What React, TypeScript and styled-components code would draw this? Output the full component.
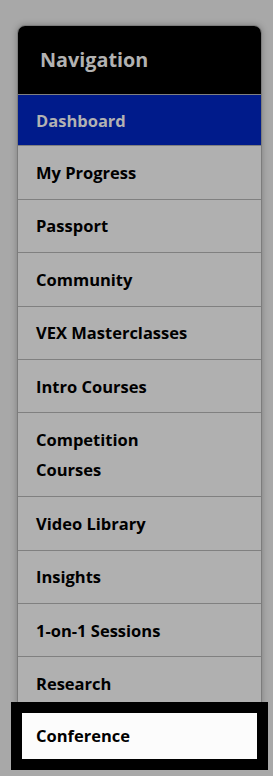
import React from "react";
import styled, { createGlobalStyle } from "styled-components";

const Global = createGlobalStyle`
  html, body {
    margin: 0;
    padding: 0;
    background: #a8a8a8;
    font-family: "Open Sans", "Noto Sans", "Liberation Sans", sans-serif;
  }
  * { box-sizing: border-box; }
`;

const Page = styled.div`
  padding: 25px 11px 0 17px;
  min-height: 776px;
  overflow: hidden;
`;

const Card = styled.nav`
  width: 245px;
  border: 1px solid #7c7c7c;
  border-radius: 8px;
  background: #b0b0b0;
  box-shadow: 0 0 6px rgba(0, 0, 0, 0.25);
  display: flex;
  flex-direction: column;
`;

const Header = styled.div`
  height: 69px;
  background: #000;
  border-radius: 7px 7px 0 0;
  border-bottom: 1px solid #808080;
  display: flex;
  align-items: center;
  padding-left: 22px;
  padding-bottom: 1px;
  color: #b2b2b2;
  font-size: 19.8px;
  font-weight: 700;
`;

const List = styled.ul`
  list-style: none;
  margin: 0;
  padding: 0;
  display: flex;
  flex-direction: column;
`;

const Item = styled.li<{ $active?: boolean }>`
  padding: ${(p) => (p.$active ? "10.5px 18px 9.5px" : "11.5px 18px 10.5px")};
  line-height: 30.4px;
  font-size: 16.5px;
  font-weight: 700;
  color: ${(p) => (p.$active ? "#b2b2b2" : "#000")};
  background: ${(p) => (p.$active ? "#001b8b" : "transparent")};
  border-bottom: 1px solid #808080;
`;

const Label = styled.span`
  display: inline-block;
  max-width: 165px;
`;

const Spotlight = styled.li`
  position: relative;
  z-index: 2;
  margin: 2px 4px 0;
  height: 46px;
  padding: 0 14px;
  display: flex;
  align-items: center;
  background: #fcfcfc;
  outline: 11px solid #000;
  font-size: 16.5px;
  font-weight: 700;
  color: #000;
`;

const items = [
  "My Progress",
  "Passport",
  "Community",
  "VEX Masterclasses",
  "Intro Courses",
  "Competition Courses",
  "Video Library",
  "Insights",
  "1-on-1 Sessions",
  "Research",
];

export default function App() {
  return (
    <>
      <Global />
      <Page>
        <Card>
          <Header>Navigation</Header>
          <List>
            <Item $active>
              <Label>Dashboard</Label>
            </Item>
            {items.map((t) => (
              <Item key={t}>
                <Label>{t}</Label>
              </Item>
            ))}
            <Spotlight>Conference</Spotlight>
          </List>
        </Card>
      </Page>
    </>
  );
}
